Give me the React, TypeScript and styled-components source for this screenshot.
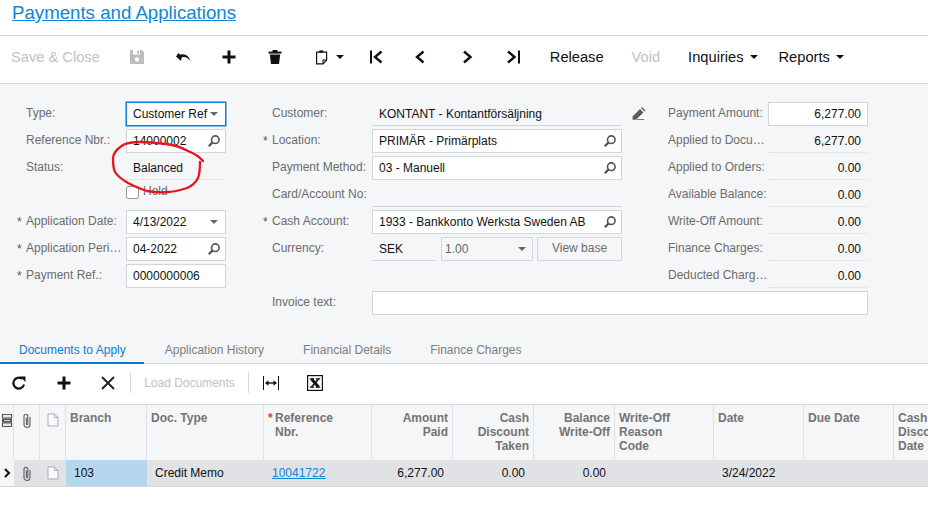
import React from "react";
import styled, { createGlobalStyle } from "styled-components";

const GlobalStyle = createGlobalStyle`
  html, body { margin: 0; padding: 0; background: #fff; overflow: hidden; }
  body { font-family: "Liberation Sans", Arial, sans-serif; font-size: 12px; color: #000; }
`;

const Page = styled.div`
  position: relative;
  width: 928px;
  height: 510px;
  overflow: hidden;
  background: #fff;
`;

const TitleBar = styled.div`
  height: 35px;
  padding-left: 12px;
  border-bottom: 1px solid #d4d4d4;
  line-height: 25px;
`;

const Title = styled.a`
  font-size: 18.67px;
  color: #0f86d6;
  text-decoration: underline;
`;

const Toolbar = styled.div`
  display: flex;
  align-items: center;
  height: 41px;
  padding-bottom: 6px;
  border-bottom: 1px solid #d4d4d4;
`;

const TextButton = styled.div<{ $off?: boolean; $first?: boolean; $menu?: boolean }>`
  display: flex;
  align-items: center;
  gap: 6px;
  padding: 0 ${(p) => (p.$menu ? "7px" : "14px")} 0 ${(p) => (p.$first ? "11px" : "14px")};
  font-size: 14.67px;
  color: ${(p) => (p.$off ? "#c2c2c2" : "#111")};
`;

const IconButton = styled.div`
  display: flex;
  align-items: center;
  justify-content: center;
  width: 46px;
  flex: none;
`;

const PasteButton = styled(IconButton)`
  box-sizing: border-box;
  width: 54px;
  padding-left: 7px;
  gap: 7px;
`;

const Caret = styled.span`
  display: inline-block;
  flex: none;
  width: 0;
  height: 0;
  border-left: 4px solid transparent;
  border-right: 4px solid transparent;
  border-top: 4px solid #111;
`;

const FormArea = styled.div`
  background: #f4f6f8;
  padding: 18px 0 23px 26px;
`;

const Columns = styled.div`
  display: flex;
  gap: 46px;
`;

const Column = styled.div<{ $w: number }>`
  width: ${(p) => p.$w}px;
  flex: none;
`;

const Row = styled.div`
  position: relative;
  display: flex;
  height: 24px;
  margin-bottom: 3px;
`;

const Label = styled.div<{ $req?: boolean }>`
  position: relative;
  flex: none;
  box-sizing: border-box;
  width: 100px;
  height: 22px;
  line-height: 22px;
  color: #6c6c6c;
  white-space: nowrap;
  &::before {
    content: ${(p) => (p.$req ? '"*"' : "none")};
    position: absolute;
    left: -9px;
    top: 1px;
    color: #555;
  }
`;

const LabelText = styled.span`
  display: block;
  overflow: hidden;
  text-overflow: ellipsis;
`;

const Field = styled.div<{
  $kind?: "box" | "focus" | "line" | "dots" | "disabled";
  $right?: boolean;
  $w?: number;
}>`
  box-sizing: border-box;
  display: flex;
  align-items: center;
  justify-content: ${(p) => (p.$right ? "flex-end" : "space-between")};
  flex: ${(p) => (p.$w ? "none" : "1")};
  width: ${(p) => (p.$w ? `${p.$w}px` : "auto")};
  height: 24px;
  padding: ${(p) => (p.$kind === "disabled" ? "0 5px 0 3px" : "0 6px")};
  min-width: 0;
  white-space: nowrap;
  color: ${(p) => (p.$kind === "disabled" ? "#666" : "#111")};
  background: ${(p) =>
    p.$kind === "box" || p.$kind === "focus" ? "#fff" : "transparent"};
  border: ${(p) =>
    p.$kind === "box" || p.$kind === "disabled"
      ? "1px solid #d3d5da"
      : p.$kind === "focus"
        ? "1px solid #0d7fd0"
        : "1px solid transparent"};
  border-bottom: ${(p) =>
    p.$kind === "dots"
      ? "1px dotted #d3d5da"
      : p.$kind === "line"
        ? "1px solid #d3d5da"
        : ""};
  ${(p) => p.$kind === "focus" && "box-shadow: 0 0 0 0.5px #0d7fd0;"}
`;

const SmallCaret = styled.span`
  flex: none;
  width: 0;
  height: 0;
  margin-right: 1px;
  border-left: 4px solid transparent;
  border-right: 4px solid transparent;
  border-top: 4px solid #666;
`;

const SearchSpot = styled.span`
  flex: none;
  margin-right: -2px;
`;

const HoldWrap = styled.div`
  display: flex;
  align-items: flex-start;
  gap: 4px;
  margin-left: 100px;
  line-height: 17px;
  color: #6c6c6c;
`;

const Check = styled.span`
  box-sizing: border-box;
  width: 13px;
  height: 13px;
  margin-top: 3px;
  background: #fff;
  border: 1px solid #9b9b9b;
  border-radius: 2px;
`;

const CurrencyGroup = styled.div`
  display: flex;
  flex: 1;
  gap: 4px;
`;

const GhostButton = styled.div`
  box-sizing: border-box;
  flex: 1;
  height: 24px;
  line-height: 21px;
  text-align: center;
  color: #6c6c6c;
  background: #f4f6f8;
  border: 1px solid #d3d5da;
`;

const PencilSpot = styled.div`
  position: absolute;
  right: -24px;
  top: 5px;
`;

const InvoiceRow = styled.div`
  display: flex;
  height: 24px;
  margin-left: 246px;
  width: 596px;
`;

const TabBar = styled.div`
  display: flex;
  gap: 2px;
  height: 25px;
  background: #f4f6f8;
  border-bottom: 1px solid #d4d6da;
`;

const Tab = styled.div<{ $on?: boolean }>`
  height: 26px;
  box-sizing: border-box;
  padding: 0 18px 0 19px;
  line-height: 25px;
  color: ${(p) => (p.$on ? "#0f7ccb" : "#7d7d7d")};
  border-bottom: 2px solid ${(p) => (p.$on ? "#0b78cc" : "transparent")};
`;

const GridBar = styled.div`
  display: flex;
  align-items: center;
  height: 38px;
  padding-bottom: 2px;
`;

const BarIcon = styled.div<{ $w: number; $tail?: number }>`
  box-sizing: border-box;
  display: flex;
  align-items: center;
  justify-content: center;
  flex: none;
  width: ${(p) => p.$w}px;
  padding-right: ${(p) => p.$tail ?? 0}px;
`;

const BarDivider = styled.span`
  flex: none;
  width: 1px;
  height: 20px;
  background: #d4d6da;
`;

const BarText = styled.div`
  flex: none;
  width: 117px;
  text-align: center;
  color: #c2c2c2;
`;

const COLS = "14px 26px 26px 81px 117px 108px 81px 81px 81px 99px 90px 90px 100px";

const HeaderRow = styled.div`
  display: grid;
  grid-template-columns: ${COLS};
  height: 55px;
  border-top: 1px solid #d4d6da;
  background: #f4f6f8;
`;

const Head = styled.div<{ $right?: boolean; $center?: boolean }>`
  box-sizing: border-box;
  padding: ${(p) => (p.$center ? "8px 0 0" : "6px 4px 0 4px")};
  display: ${(p) => (p.$center ? "flex" : "block")};
  justify-content: center;
  align-items: flex-start;
  line-height: 14px;
  font-weight: bold;
  color: #747474;
  text-align: ${(p) => (p.$right ? "right" : "left")};
  border-right: 1px solid #dfe1e5;
  overflow: hidden;
`;

const RefHead = styled.div`
  position: relative;
  padding-left: 7px;
  &::before {
    content: "*";
    position: absolute;
    left: 0;
    top: 0;
    color: #e0392b;
  }
`;

const DataRow = styled.div`
  display: grid;
  grid-template-columns: ${COLS};
  height: 26px;
  line-height: 26px;
  background: #e0e2e6;
  border-bottom: 1px solid #d4d6da;
`;

const Cell = styled.div<{ $right?: boolean; $center?: boolean; $sel?: boolean; $blank?: boolean }>`
  box-sizing: border-box;
  display: ${(p) => (p.$center ? "flex" : "block")};
  align-items: center;
  justify-content: center;
  padding: ${(p) => (p.$center ? "0" : "0 9px 0 8px")};
  text-align: ${(p) => (p.$right ? "right" : "left")};
  color: #111;
  background: ${(p) => (p.$sel ? "#b5d6ef" : p.$blank ? "#f4f6f8" : "transparent")};
`;

const DocLink = styled.a`
  color: #0f86d6;
  text-decoration: underline;
`;

const Scribble = styled.svg`
  position: absolute;
  left: 0;
  top: 0;
  pointer-events: none;
`;

const Ico = ({ w = 16, h = 16, children }: { w?: number; h?: number; children: React.ReactNode }) => (
  <svg width={w} height={h} viewBox={`0 0 ${w} ${h}`} style={{ display: "block" }}>
    {children}
  </svg>
);

const Search = () => (
  <SearchSpot>
    <Ico w={14} h={14}>
      <circle cx="8.3" cy="5.7" r="3.8" fill="none" stroke="#555" strokeWidth="1.6" />
      <path d="M5.6 8.4 1.8 12.2" stroke="#555" strokeWidth="2.2" />
    </Ico>
  </SearchSpot>
);

const Clip = () => (
  <Ico w={10} h={15}>
    <path
      d="M8 4v7.500a3 3 0 0 1-6 0V3.200a1.900 1.900 0 0 1 3.800 0v7.800a.7.7 0 0 1-1.400 0V4.500"
      fill="none"
      stroke="#666"
      strokeWidth="1.200"
    />
  </Ico>
);

const Sheet = () => (
  <Ico w={12} h={14}>
    <path d="M1 1h6.500L11 4.500V13H1z" fill="#fafbfc" stroke="#a9adb3" />
    <path d="M7.500 1v3.500H11" fill="none" stroke="#a9adb3" />
  </Ico>
);

const requiredLeft = [
  { label: "Application Date:", value: "4/13/2022", kind: "select" },
  { label: "Application Period:", value: "04-2022", kind: "search" },
  { label: "Payment Ref.:", value: "0000000006", kind: "plain" },
];

const amounts = [
  ["Applied to Documents:", "6,277.00"],
  ["Applied to Orders:", "0.00"],
  ["Available Balance:", "0.00"],
  ["Write-Off Amount:", "0.00"],
  ["Finance Charges:", "0.00"],
  ["Deducted Charges:", "0.00"],
];

const headers: { lines: string[]; right?: boolean }[] = [
  { lines: ["Branch"] },
  { lines: ["Doc. Type"] },
  { lines: [] },
  { lines: ["Amount", "Paid"], right: true },
  { lines: ["Cash", "Discount", "Taken"], right: true },
  { lines: ["Balance", "Write-Off"], right: true },
  { lines: ["Write-Off", "Reason", "Code"] },
  { lines: ["Date"] },
  { lines: ["Due Date"] },
  { lines: ["Cash", "Discount", "Date"] },
];

export default function App() {
  return (
    <Page>
      <GlobalStyle />
      <TitleBar>
        <Title>Payments and Applications</Title>
      </TitleBar>

      <Toolbar>
        <TextButton $off $first>Save &amp; Close</TextButton>
        <IconButton>
          <Ico>
            <path d="M1 1h12l2 2v12H1z" fill="#bdbdbd" />
            <rect x="4" y="1" width="7" height="4.500" fill="#fff" />
            <rect x="8" y="1.600" width="2" height="3" fill="#bdbdbd" />
            <circle cx="8" cy="10.500" r="2.200" fill="#fff" />
          </Ico>
        </IconButton>
        <IconButton>
          <Ico>
            <path d="M1 7.500 6 12l.6-3.500c3-1.200 6-.2 8.900 3.500C14 7.200 10 4.200 5.200 5.700L3.500 4z" fill="#111" />
          </Ico>
        </IconButton>
        <IconButton>
          <Ico>
            <path d="M8 1.500v13M1.500 8h13" stroke="#111" strokeWidth="3" />
          </Ico>
        </IconButton>
        <IconButton>
          <Ico>
            <rect x="1.500" y="2.600" width="13" height="2" fill="#111" />
            <rect x="5.500" y="1" width="5" height="2" fill="#111" />
            <path d="M2.800 5.600h10.400L12 15H4z" fill="#111" />
          </Ico>
        </IconButton>
        <PasteButton>
          <Ico>
            <path d="M3.600 3.200h10v8L10 14.800H3.600z" fill="#fff" stroke="#111" strokeWidth="1.200" />
            <path d="M6.300 3.400V1.400h4v2z" fill="#111" />
            <path d="M13.600 11H10v3.800" fill="none" stroke="#111" strokeWidth="1.100" />
          </Ico>
          <Caret />
        </PasteButton>
        <IconButton>
          <Ico>
            <path d="M4 1.500v13" stroke="#111" strokeWidth="2" />
            <path d="M14.500 2.500 8 8l6.500 5.500" fill="none" stroke="#111" strokeWidth="2.400" />
          </Ico>
        </IconButton>
        <IconButton>
          <Ico>
            <path d="M10.500 2.500 4 8l6.500 5.500" fill="none" stroke="#111" strokeWidth="2.400" />
          </Ico>
        </IconButton>
        <IconButton>
          <Ico>
            <path d="M5 2.500 11.500 8 5 13.500" fill="none" stroke="#111" strokeWidth="2.400" />
          </Ico>
        </IconButton>
        <IconButton>
          <Ico>
            <path d="M14 1.500v13" stroke="#111" strokeWidth="2" />
            <path d="M3 2.500 9.500 8 3 13.500" fill="none" stroke="#111" strokeWidth="2.400" />
          </Ico>
        </IconButton>
        <TextButton>Release</TextButton>
        <TextButton $off>Void</TextButton>
        <TextButton $menu>Inquiries<Caret /></TextButton>
        <TextButton $menu>Reports<Caret /></TextButton>
      </Toolbar>

      <FormArea>
        <Columns>
          <Column $w={200}>
            <Row>
              <Label><LabelText>Type:</LabelText></Label>
              <Field $kind="focus">Customer Ref<SmallCaret /></Field>
            </Row>
            <Row>
              <Label><LabelText>Reference Nbr.:</LabelText></Label>
              <Field $kind="box">14000002<Search /></Field>
            </Row>
            <Row>
              <Label><LabelText>Status:</LabelText></Label>
              <Field $kind="dots">Balanced</Field>
            </Row>
            <Row>
              <HoldWrap><Check />Hold</HoldWrap>
            </Row>
            {requiredLeft.map((r) => (
              <Row key={r.label}>
                <Label $req><LabelText>{r.label}</LabelText></Label>
                <Field $kind="box">
                  {r.value}
                  {r.kind === "select" && <SmallCaret />}
                  {r.kind === "search" && <Search />}
                </Field>
              </Row>
            ))}
          </Column>

          <Column $w={350}>
            <Row>
              <Label><LabelText>Customer:</LabelText></Label>
              <Field $kind="line">KONTANT - Kontantförsäljning</Field>
              <PencilSpot>
                <Ico w={14} h={14}>
                  <path d="M.6 9.400 8 2l3.400 3.400L4 12.800H.6z" fill="#5a5a5a" />
                  <path d="M9 1l1-1 3.400 3.400-1 1z" fill="#5a5a5a" />
                  <path d="M5 12.500h7" stroke="#777" />
                </Ico>
              </PencilSpot>
            </Row>
            <Row>
              <Label $req><LabelText>Location:</LabelText></Label>
              <Field $kind="box">PRIMÄR - Primärplats<Search /></Field>
            </Row>
            <Row>
              <Label><LabelText>Payment Method:</LabelText></Label>
              <Field $kind="box">03 - Manuell<Search /></Field>
            </Row>
            <Row>
              <Label><LabelText>Card/Account No:</LabelText></Label>
              <Field $kind="line" />
            </Row>
            <Row>
              <Label $req><LabelText>Cash Account:</LabelText></Label>
              <Field $kind="box">1933 - Bankkonto Werksta Sweden AB<Search /></Field>
            </Row>
            <Row>
              <Label><LabelText>Currency:</LabelText></Label>
              <CurrencyGroup>
                <Field $kind="line" $w={65}>SEK</Field>
                <Field $kind="disabled" $w={92}>1.00<SmallCaret /></Field>
                <GhostButton>View base</GhostButton>
              </CurrencyGroup>
            </Row>
          </Column>

          <Column $w={200}>
            <Row>
              <Label><LabelText>Payment Amount:</LabelText></Label>
              <Field $kind="box" $right>6,277.00</Field>
            </Row>
            {amounts.map(([label, value]) => (
              <Row key={label}>
                <Label><LabelText>{label}</LabelText></Label>
                <Field $kind="dots" $right>{value}</Field>
              </Row>
            ))}
          </Column>
        </Columns>
        <InvoiceRow>
          <Label><LabelText>Invoice text:</LabelText></Label>
          <Field $kind="box" />
        </InvoiceRow>
      </FormArea>

      <TabBar>
        <Tab $on>Documents to Apply</Tab>
        <Tab>Application History</Tab>
        <Tab>Financial Details</Tab>
        <Tab>Finance Charges</Tab>
      </TabBar>

      <GridBar>
        <BarIcon $w={38}>
          <Ico>
            <path d="M13 9.500A5.400 5.400 0 1 1 11 3.800" fill="none" stroke="#111" strokeWidth="2.200" />
            <path d="M9 1.500h5.500V7z" fill="#111" />
          </Ico>
        </BarIcon>
        <BarIcon $w={52}>
          <Ico>
            <path d="M8 1.500v13M1.500 8h13" stroke="#111" strokeWidth="3" />
          </Ico>
        </BarIcon>
        <BarIcon $w={40} $tail={4}>
          <Ico>
            <path d="M2 2l12 12M14 2 2 14" stroke="#222" strokeWidth="1.900" />
          </Ico>
        </BarIcon>
        <BarDivider />
        <BarText>Load Documents</BarText>
        <BarDivider />
        <BarIcon $w={43}>
          <Ico>
            <path d="M.5 1v14M15.500 1v14" stroke="#111" />
            <path d="M3 8h10" stroke="#111" strokeWidth="1.400" />
            <path d="M2 8l3.500-2.800v5.600zM14 8l-3.500-2.800v5.600z" fill="#111" />
          </Ico>
        </BarIcon>
        <BarIcon $w={46}>
          <Ico>
            <rect x=".6" y=".6" width="14.800" height="14.800" fill="#fff" stroke="#111" strokeWidth="1.200" />
            <path d="M4.500 4 11.500 12" stroke="#111" strokeWidth="3" />
            <path d="M11.500 4 4.500 12" stroke="#111" strokeWidth="1.600" />
            <path d="M2.800 3.800h4.400M8.800 3.800h4.400M2.800 12.200h4.400M8.800 12.200h4.400" stroke="#111" strokeWidth="1.200" />
          </Ico>
        </BarIcon>
      </GridBar>

      <HeaderRow>
        <Head $center>
          <Ico w={12} h={15}>
            <path d="M1.500 1.500h9v3.500h-9zM1.500 10h9v3.500h-9z" fill="none" stroke="#555" strokeWidth="1.200" />
            <rect x="1" y="5.500" width="10" height="4" fill="#555" />
            <path d="M3.500 3.200h5M3 7.500h6M3.500 11.800h5" stroke="#d8dadd" />
          </Ico>
        </Head>
        <Head $center><Clip /></Head>
        <Head $center><Sheet /></Head>
        {headers.map((h, i) => (
          <Head key={i} $right={h.right}>
            {i === 2 ? (
              <RefHead>Reference<br />Nbr.</RefHead>
            ) : (
              h.lines.map((l) => <div key={l}>{l}</div>)
            )}
          </Head>
        ))}
      </HeaderRow>

      <DataRow>
        <Cell $center $blank>
          <Ico w={8} h={10}>
            <path d="M2 1l4 4-4 4" fill="none" stroke="#111" strokeWidth="2" />
          </Ico>
        </Cell>
        <Cell $center><Clip /></Cell>
        <Cell $center><Sheet /></Cell>
        <Cell $sel>103</Cell>
        <Cell>Credit Memo</Cell>
        <Cell><DocLink>10041722</DocLink></Cell>
        <Cell $right>6,277.00</Cell>
        <Cell $right>0.00</Cell>
        <Cell $right>0.00</Cell>
        <Cell />
        <Cell>3/24/2022</Cell>
        <Cell />
        <Cell />
      </DataRow>

      <Scribble width="928" height="510" viewBox="0 0 928 510">
        <path
          d="M203 161C198 155 193 153 188 151C181 147 174 145 166 144C157 143 148 142 140 142C133 142 127 143 123 145C117 149 113 153 113 158C113 164 113 168 115 172C118 177 123 180 128 183C134 186 140 189 147 191C153 192 160 193 167 192C174 192 181 190 187 188C192 186 196 182 198 178C200 173 200 167 200 162"
          fill="none"
          stroke="#e5141f"
          strokeWidth="2.300"
          strokeLinecap="round"
        />
      </Scribble>
    </Page>
  );
}
